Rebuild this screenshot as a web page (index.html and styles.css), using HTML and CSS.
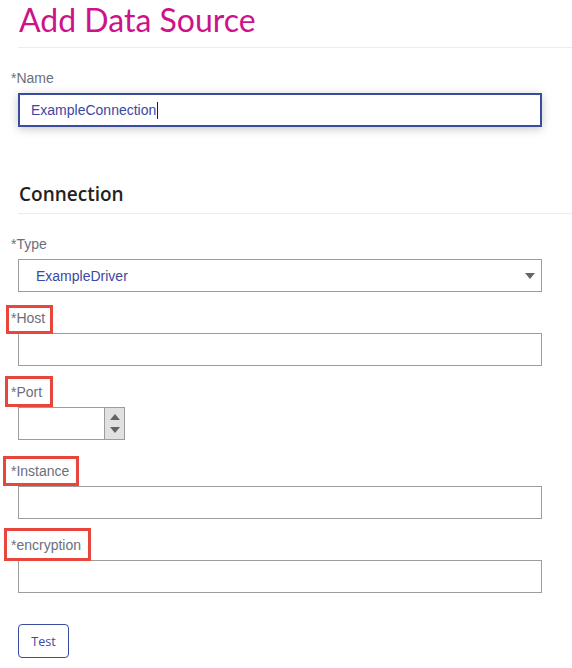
FILE: index.html
```html
<!DOCTYPE html>
<html>
<head>
<meta charset="utf-8">
<link rel="stylesheet" href="styles.css">
</head>
<body>
<div class="page">
  <h1 class="title">Add Data Source</h1>

  <div class="field field-name">
    <label class="label">*Name</label>
    <div class="input input-focus"><span class="value">ExampleConnection</span><span class="caret"></span></div>
  </div>

  <h2 class="section">Connection</h2>

  <div class="field field-type">
    <label class="label">*Type</label>
    <div class="select"><span class="value">ExampleDriver</span><span class="arrow"></span></div>
  </div>

  <div class="field">
    <label class="label">*Host<span class="mark mark-host"></span></label>
    <div class="input"></div>
  </div>

  <div class="field">
    <label class="label">*Port<span class="mark mark-port"></span></label>
    <div class="number">
      <div class="number-box"></div>
      <div class="spinner"><span class="up"></span><span class="down"></span></div>
    </div>
  </div>

  <div class="field field-after-number">
    <label class="label">*Instance<span class="mark mark-instance"></span></label>
    <div class="input"></div>
  </div>

  <div class="field">
    <label class="label">*encryption<span class="mark mark-enc"></span></label>
    <div class="input"></div>
  </div>

  <button class="btn">Test</button>
</div>
</body>
</html>
```

FILE: styles.css
```css
html, body {
  margin: 0;
  padding: 0;
  background: #ffffff;
}
body {
  font-family: "Liberation Sans", Arial, sans-serif;
  width: 572px;
  height: 668px;
  overflow: hidden;
}
.page {
  display: flex;
  flex-direction: column;
  align-items: flex-start;
  padding-left: 18px;
}
.title {
  align-self: stretch;
  margin: 0;
  padding: 0 0 7px 1px;
  font-family: Lato, "Open Sans", sans-serif;
  font-weight: 400;
  font-size: 32px;
  line-height: 40px;
  color: #cc1389;
  border-bottom: 1px solid #ececec;
}
.section {
  align-self: stretch;
  margin: 54px 0 0 0;
  padding: 0 0 6px 1px;
  font-family: "Open Sans", sans-serif;
  font-weight: 600;
  font-size: 19px;
  line-height: 26px;
  color: #222222;
  border-bottom: 1px solid #ececec;
}
.field {
  display: flex;
  flex-direction: column;
  align-items: flex-start;
  margin-top: 18px;
}
.field-name,
.field-type {
  margin-top: 22px;
}
.field-after-number {
  margin-top: 23px;
}
.label {
  position: relative;
  margin-left: -7px;
  margin-bottom: 7px;
  font-size: 14px;
  line-height: 16px;
  color: #6b6f7b;
}
.mark {
  position: absolute;
  border: 3px solid #e8453c;
  box-sizing: border-box;
}
.mark-host { left: -5px; top: -5px; width: 47px; height: 29px; }
.mark-port { left: -6px; top: -8px; width: 48px; height: 31px; }
.mark-instance { left: -8px; top: -7px; width: 76px; height: 30px; }
.mark-enc { left: -7px; top: -9px; width: 87px; height: 33px; }

.input {
  box-sizing: border-box;
  width: 524px;
  height: 33px;
  border: 1px solid #9c9c9c;
  background: #fff;
  display: flex;
  align-items: center;
}
.input-focus {
  height: 34px;
  border: 2px solid #3a4ca0;
  padding-left: 11px;
  box-shadow: 0 2px 9px rgba(0, 0, 0, 0.22);
}
.value {
  font-size: 14px;
  color: #3b48a3;
}
.caret {
  display: inline-block;
  width: 1px;
  height: 17px;
  background: #222;
  margin-left: 1px;
}
.select {
  box-sizing: border-box;
  width: 524px;
  height: 33px;
  border: 1px solid #9c9c9c;
  background: #fff;
  display: flex;
  align-items: center;
  justify-content: space-between;
  padding: 0 6px 0 17px;
}
.arrow {
  width: 0;
  height: 0;
  border-left: 5px solid transparent;
  border-right: 5px solid transparent;
  border-top: 6px solid #666;
  margin-top: 1px;
}
.number {
  box-sizing: border-box;
  width: 107px;
  height: 33px;
  border: 1px solid #9c9c9c;
  display: flex;
}
.number-box {
  flex: 1;
  background: #fff;
}
.spinner {
  width: 19px;
  background: #e1e1e1;
  border-left: 1px solid #9c9c9c;
  display: flex;
  flex-direction: column;
  align-items: center;
  justify-content: center;
  gap: 7px;
}
.up {
  width: 0;
  height: 0;
  border-left: 5px solid transparent;
  border-right: 5px solid transparent;
  border-bottom: 6px solid #636363;
}
.down {
  width: 0;
  height: 0;
  border-left: 5px solid transparent;
  border-right: 5px solid transparent;
  border-top: 6px solid #636363;
}
.btn {
  margin-top: 31px;
  box-sizing: border-box;
  width: 51px;
  height: 34px;
  border: 1px solid #3a4ca0;
  border-radius: 4px;
  background: #fff;
  color: #3b48a3;
  font-family: "Open Sans", sans-serif;
  font-size: 12.5px;
  padding: 0;
}
```
